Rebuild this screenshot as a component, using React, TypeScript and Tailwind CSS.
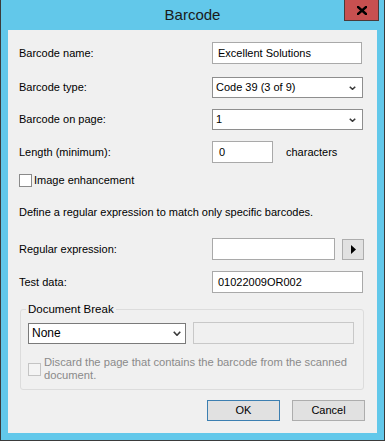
import React from 'react';

const font = "font-['Liberation_Sans',Arial,sans-serif]";

function Chevron({ w = 7, h = 4 }: { w?: number; h?: number }) {
  return (
    <svg width={w} height={h} viewBox={`0 0 ${w} ${h}`} className="shrink-0">
      <polyline
        points={`0.75,0.75 ${w / 2},${h - 0.75} ${w - 0.75},0.75`}
        fill="none"
        stroke="#3a3a3a"
        strokeWidth="1.6"
      />
    </svg>
  );
}

function TextBox({ value, className = '' }: { value?: string; className?: string }) {
  return (
    <div
      className={`h-[22px] bg-white border border-[#a9a9a9] flex items-center pl-[5px] text-[11px] text-black ${className}`}
    >
      {value}
    </div>
  );
}

function Select({ value, className = '' }: { value: string; className?: string }) {
  return (
    <div
      className={`h-[21px] bg-white border border-[#8e8e8e] flex items-center justify-between pl-[3px] pr-[6px] text-[11px] text-black ${className}`}
    >
      <span>{value}</span>
      <Chevron />
    </div>
  );
}

function Row({ label, children, className = '' }: { label: string; children: React.ReactNode; className?: string }) {
  return (
    <div className={`flex items-center ${className}`}>
      <div className="w-[193px] shrink-0 text-[11px] text-black">{label}</div>
      {children}
    </div>
  );
}

function Button({ label, primary = false }: { label: string; primary?: boolean }) {
  return (
    <div
      className={`w-[73px] h-[21px] flex items-center justify-center bg-[#e1e1e1] border text-[11px] text-black ${
        primary ? 'border-[#3c7fb1]' : 'border-[#adadad]'
      }`}
    >
      {label}
    </div>
  );
}

export default function App() {
  return (
    <div className={`w-[385px] h-[441px] bg-[#62c8ea] border-x border-b border-[#3b3b3b] flex flex-col ${font}`}>
      {/* title bar */}
      <div className="h-[30px] shrink-0 grid grid-cols-[1fr_auto_1fr]">
        <div />
        <div className="self-center text-[15px] leading-none text-[#1a1a1a] pb-[1px]">Barcode</div>
        <div className="flex justify-end items-start pr-[5px]">
          <div className="w-[35px] h-[21px] bg-[#c75050] border border-[#4a3a3a] border-t-0 flex items-center justify-center">
            <svg width="10" height="9" viewBox="0 0 10 9">
              <path d="M1 1 L9 8 M9 1 L1 8" stroke="#000" strokeWidth="2.4" strokeLinecap="square" />
            </svg>
          </div>
        </div>
      </div>

      {/* client area */}
      <div className="mx-[7px] h-[403px] bg-[#f0f0f0] flex flex-col pl-[11px] pt-[12px]">
        <Row label="Barcode name:">
          <TextBox value="Excellent Solutions" className="w-[150px]" />
        </Row>
        <Row label="Barcode type:" className="mt-[13px]">
          <Select value="Code 39 (3 of 9)" className="w-[151px]" />
        </Row>
        <Row label="Barcode on page:" className="mt-[11px]">
          <Select value="1" className="w-[151px]" />
        </Row>
        <Row label="Length (minimum):" className="mt-[11px]">
          <TextBox value="0" className="w-[61px] pl-[6px]" />
          <span className="ml-[13px] text-[11px] text-black">characters</span>
        </Row>

        <div className="mt-[11px] flex items-center h-[13px]">
          <div className="w-[13px] h-[13px] bg-white border border-[#8a8a8a]" />
          <span className="ml-[2px] text-[11px] text-black">Image enhancement</span>
        </div>

        <div className="mt-[18px] h-[14px] leading-[14px] text-[11px] text-black">
          Define a regular expression to match only specific barcodes.
        </div>

        <Row label="Regular expression:" className="mt-[19px]">
          <TextBox className="w-[123px]" />
          <div className="ml-[7px] w-[22px] h-[21px] bg-[#e1e1e1] border border-[#adadad] flex items-center justify-center">
            <svg width="5" height="9" viewBox="0 0 5 9">
              <polygon points="0,0 5,4.5 0,9" fill="#000" />
            </svg>
          </div>
        </Row>
        <Row label="Test data:" className="mt-[11px]">
          <TextBox value="01022009OR002" className="w-[151px]" />
        </Row>

        <fieldset className="mt-[9px] ml-[1px] w-[344px] border border-[#dcdcdc] rounded-[3px] pl-[7px] pr-[9px] pb-[7px]">
          <legend className="-ml-[2px] px-[2px] text-[11.5px] leading-[14px] text-black">Document Break</legend>
          <div className="mt-[6px] flex items-center gap-[7px]">
            <div className="w-[158px] h-[21px] bg-white border border-[#7a7a7a] flex items-center justify-between pl-[3px] pr-[4px] text-[12px] text-black">
              <span>None</span>
              <Chevron w={8} h={5} />
            </div>
            <div className="w-[161px] h-[22px] bg-[#f0f0f0] border border-[#c8c8c8]" />
          </div>
          <div className="mt-[12px] flex items-center">
            <div className="w-[13px] h-[13px] shrink-0 bg-[#f4f4f4] border border-[#c4c4c4]" />
            <div className="ml-[3px] text-[11.2px] leading-[13px] text-[#8a8a8a] whitespace-nowrap">
              Discard the page that contains the barcode from the scanned
              <br />
              document.
            </div>
          </div>
        </fieldset>

        <div className="mt-[10px] flex justify-end gap-[12px] pr-[12px]">
          <Button label="OK" primary />
          <Button label="Cancel" />
        </div>
      </div>
    </div>
  );
}
